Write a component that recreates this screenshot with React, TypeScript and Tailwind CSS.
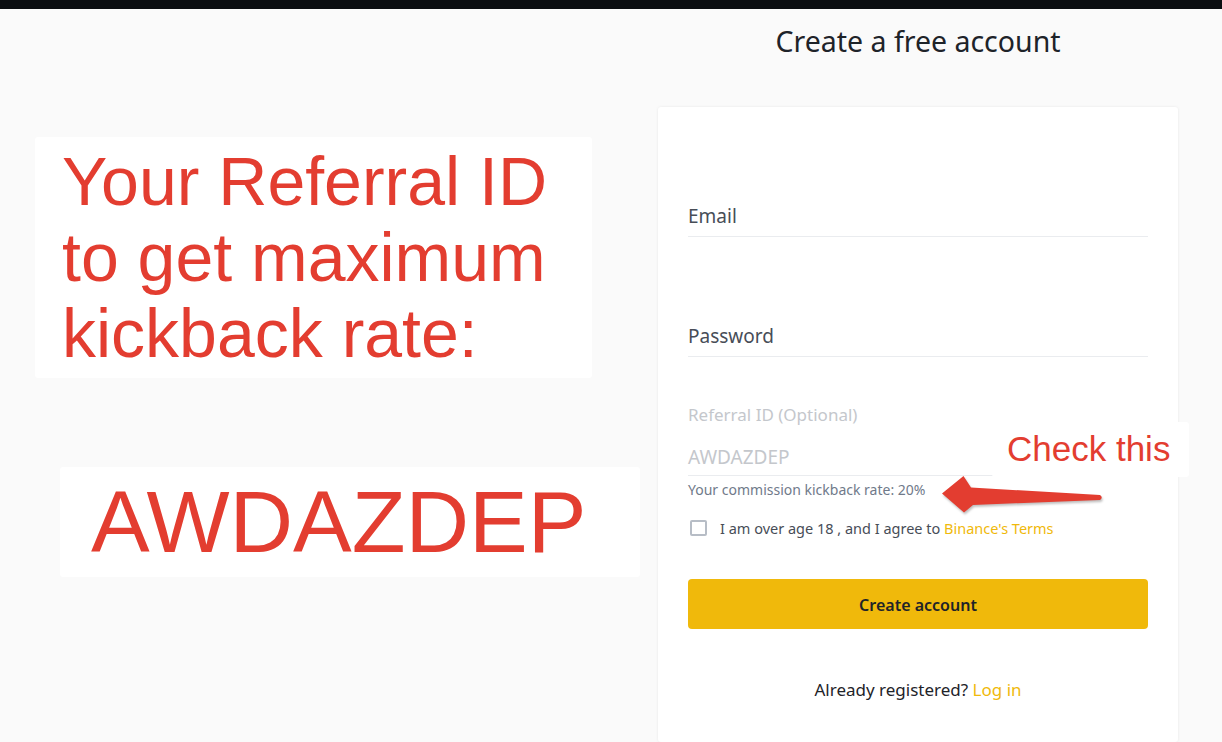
import React from 'react'

const red = 'text-[#e33d30]'

const Field = ({ label }: { label: string }) => (
  <div className="border-b border-[#eaecef] pb-[8px]">
    <div className="text-[19px] leading-[24px] text-[#474d57]">{label}</div>
  </div>
)

const Arrow = () => (
  <svg
    className="absolute left-[282px] top-[367px] drop-shadow-[1px_2px_1px_rgba(0,0,0,0.25)]"
    width="166"
    height="41"
    viewBox="0 0 166 41"
  >
    <path
      d="M2 19.5 L23.5 2 L31 13.5 L160 21 Q163.5 23.5 160 26 L33 31 L24 38.5 Z"
      fill="#e33d30"
    />
  </svg>
)

const App = () => {
  return (
    <div className="h-[742px] w-full overflow-hidden bg-[#fafafa]">
      <div className="h-[9px] bg-[#0b0e11]" />
      <div className="flex">
        <div className="w-[658px] shrink-0 font-['Liberation_Sans',Arial,sans-serif]">
          <div className="ml-[35px] mt-[128px] h-[241px] w-[557px] rounded-[3px] bg-white pl-[27px] pt-[6px]">
            <div className={`${red} text-[68px] leading-[76px]`}>
              <div>Your Referral ID</div>
              <div>to get maximum</div>
              <div>kickback rate:</div>
            </div>
          </div>
          <div className="ml-[60px] mt-[89px] h-[110px] w-[580px] rounded-[3px] bg-white pl-[31px] pt-[11px]">
            <div className={`${red} text-[88px] leading-[87px]`}>AWDAZDEP</div>
          </div>
        </div>

        <div className="w-[520px] shrink-0 font-['Noto_Sans',sans-serif]">
          <h1 className="mt-[14px] text-center text-[28.5px] leading-[36px] font-normal text-[#1e2329]">
            Create a free account
          </h1>
          <div className="relative mt-[48px] h-[635px] rounded-[3px] bg-white px-[30px] pt-[97px] shadow-[0_0_3px_rgba(0,0,0,0.08)]">
            <Field label="Email" />
            <div className="mt-[87px]">
              <Field label="Password" />
            </div>

            <div className="mt-[47px] text-[17px] leading-[22px] text-[#c4c7cc]">
              Referral ID (Optional)
            </div>
            <div className="mt-[19px] border-b border-[#eaecef] pb-[6px]">
              <div className="text-[19px] leading-[24px] text-[#c4c7cc]">AWDAZDEP</div>
            </div>
            <div className="mt-[5px] text-[14px] leading-[18px] text-[#707a8a]">
              Your commission kickback rate: 20%
            </div>

            <div className="mt-[19px] flex items-center">
              <span className="ml-[2px] h-[16px] w-[17px] rounded-[2px] border-2 border-[#b7bdc6]" />
              <span className="ml-[13px] text-[14.5px] leading-[20px] text-[#474d57]">
                I am over age 18 , and I agree to{' '}
                <span className="text-[#f0b90b]">Binance's Terms</span>
              </span>
            </div>

            <button className="mt-[41px] h-[50px] w-full rounded-[4px] bg-[#f0b90b] pt-[2px] text-[16px] font-semibold text-[#1e2329]">
              Create account
            </button>

            <div className="mt-[50px] text-center text-[17px] leading-[22px] text-[#1e2329]">
              Already registered? <span className="text-[#f0b90b]">Log in</span>
            </div>

            <div className="absolute left-[334px] top-[315px] h-[55px] w-[197px] rounded-[3px] bg-white pl-[15px] pt-[7px] font-['Liberation_Sans',Arial,sans-serif]">
              <div className={`${red} text-[35px] leading-[40px]`}>Check this</div>
            </div>
            <Arrow />
          </div>
        </div>
      </div>
    </div>
  )
}

export default App
